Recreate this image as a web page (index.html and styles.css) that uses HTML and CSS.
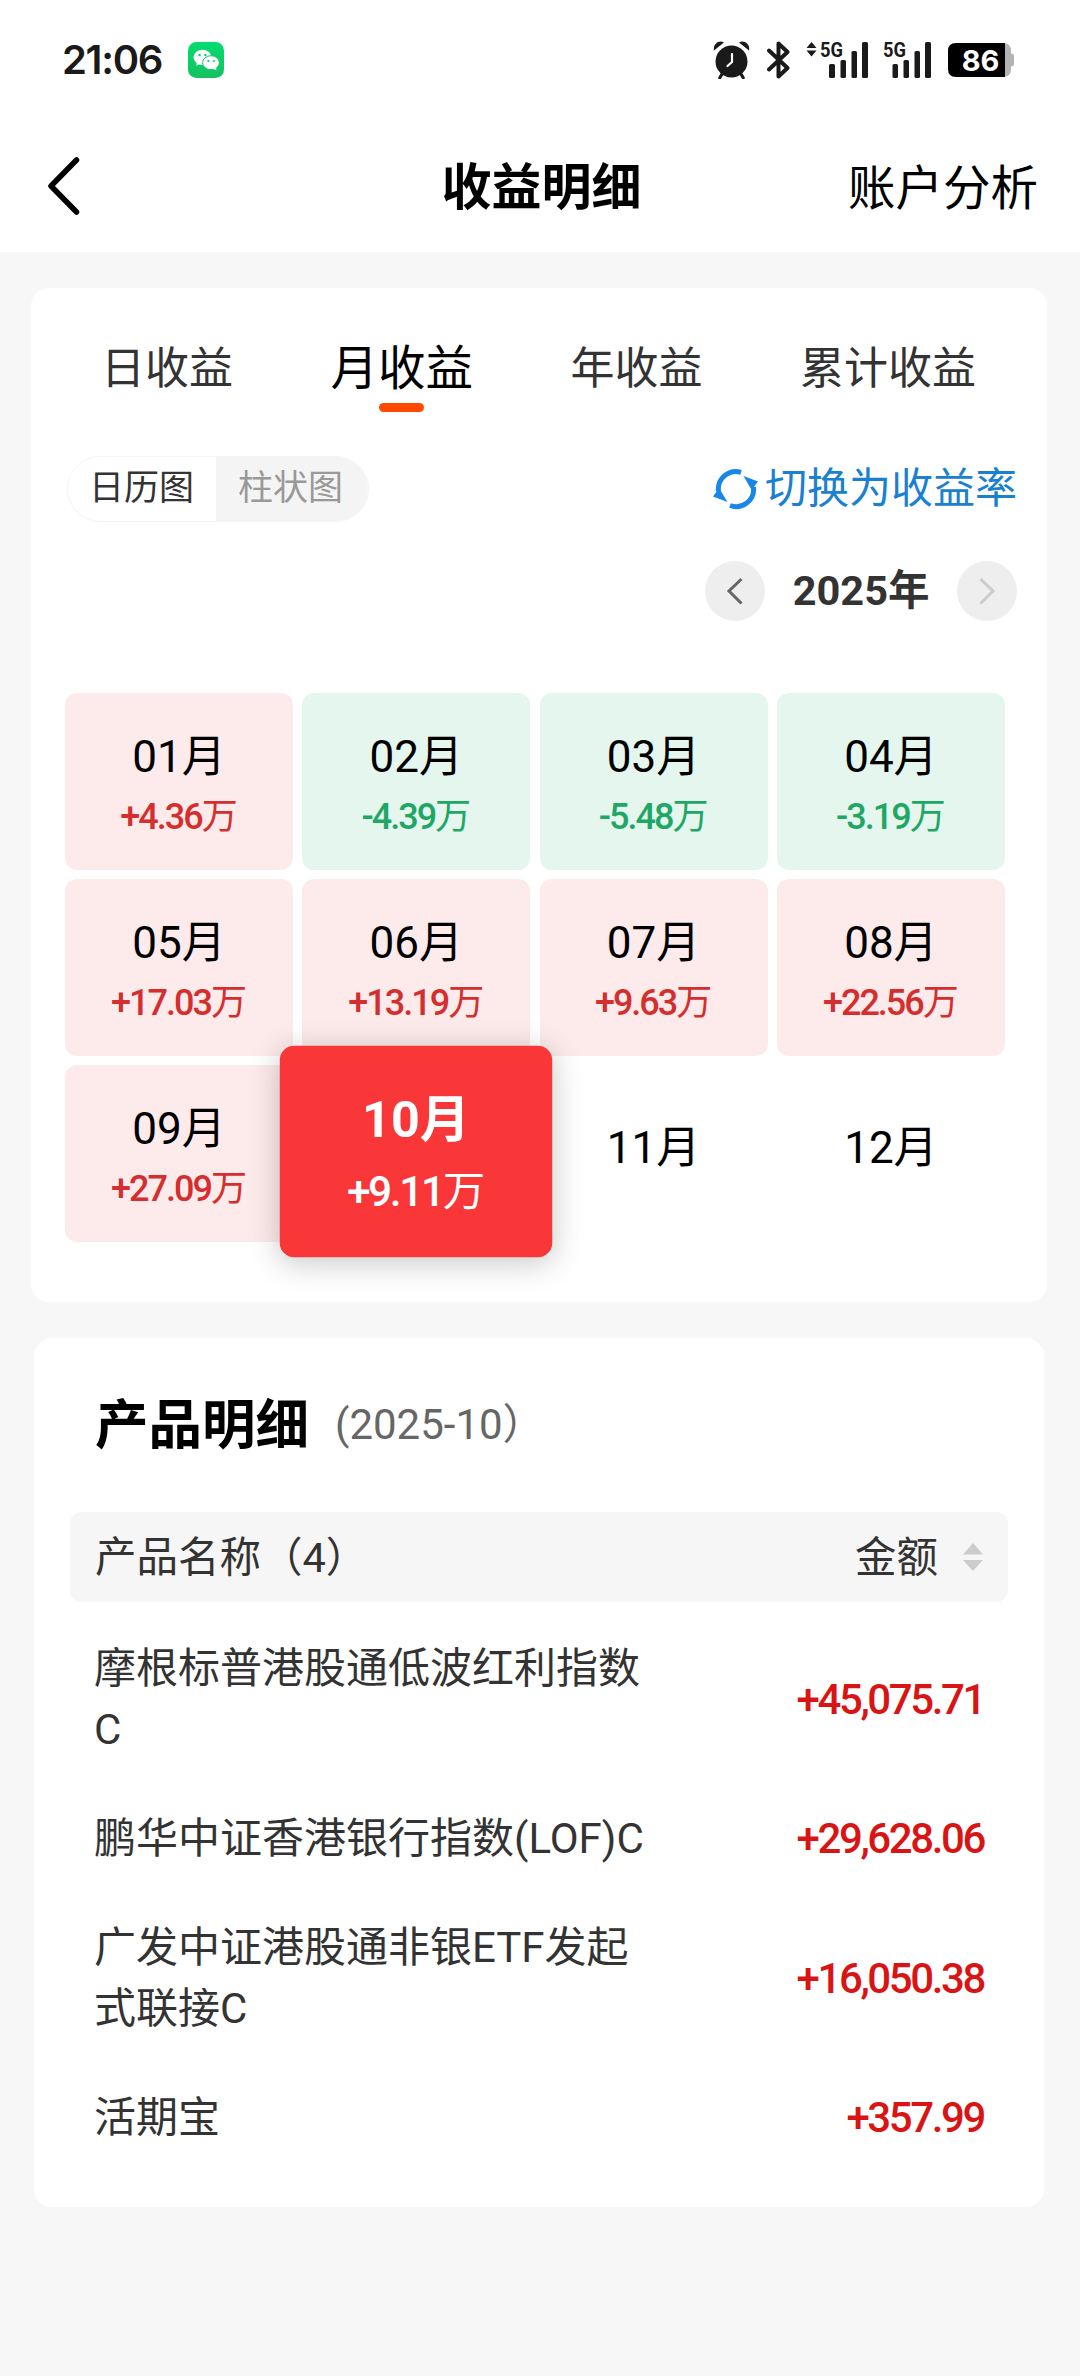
FILE: index.html
```
<!DOCTYPE html>
<html lang="zh-CN">
<head>
  <meta charset="UTF-8">
  <meta name="viewport" content="width=device-width, initial-scale=1.0">
  <title>收益明细</title>
  <link rel="stylesheet" href="styles.css">
</head>
<body>

  <!-- 状态栏 -->
  <div class="status-bar">
    <span class="time">21:06</span>
    <svg class="wechat" width="36" height="36" viewBox="0 0 36 36">
      <defs>
        <linearGradient id="wx" x1="0" y1="0" x2="0" y2="1">
          <stop offset="0" stop-color="#05dc70"/>
          <stop offset="1" stop-color="#14c160"/>
        </linearGradient>
      </defs>
      <rect width="36" height="36" rx="8.5" fill="url(#wx)"/>
      <ellipse cx="14.5" cy="15.3" rx="9" ry="7.6" fill="#fff"/>
      <path d="M9 20l-.8 3.8 4.3-2z" fill="#fff"/>
      <ellipse cx="23" cy="20.7" rx="8.4" ry="7" fill="#fff" stroke="#0dce68" stroke-width="1"/>
      <path d="M25 26.5l3.4 2-.4-4z" fill="#fff"/>
      <circle cx="11.6" cy="13" r="1.2" fill="#0dce68"/>
      <circle cx="17.4" cy="13" r="1.2" fill="#0dce68"/>
      <circle cx="20.4" cy="19" r="1.1" fill="#0dce68"/>
      <circle cx="25.8" cy="19" r="1.1" fill="#0dce68"/>
    </svg>

    <div class="status-icons">
      <svg class="alarm" width="37" height="38" viewBox="0 0 37 38">
        <circle cx="18.5" cy="20.5" r="16" fill="#1a1a1a"/>
        <path d="M1 9.5C-.5 4 5.5-2 11 1.5z" fill="#1a1a1a"/>
        <path d="M36 9.5C37.5 4 31.5-2 26 1.5z" fill="#1a1a1a"/>
        <path d="M9 33l-2.200 3.700M28 33l2.200 3.700" stroke="#1a1a1a" stroke-width="3.200" stroke-linecap="round"/>
        <path d="M19 13v8l-4.500 4" fill="none" stroke="#fff" stroke-width="2.200" stroke-linecap="round"/>
      </svg>
      <svg class="bluetooth" width="23" height="38" viewBox="0 0 23 38">
        <path d="M2 9.500l18.500 17.500-9 8.500v-33l9 8.500L2 28.500" fill="none" stroke="#1a1a1a" stroke-width="4" stroke-linejoin="round" stroke-linecap="round"/>
      </svg>
      <svg class="signal-main" width="62" height="46" viewBox="0 -4 62 46">
        <path d="M5.500 1l5 6h-10zM5.500 15.500l5-6h-10z" fill="#1a1a1a"/>
        <text x="14" y="15.500" class="net" textLength="23" lengthAdjust="spacingAndGlyphs">5G</text>
        <g fill="#1a1a1a">
          <rect x="23" y="23" width="6" height="14" rx="1.500"/>
          <rect x="34.500" y="19" width="5.500" height="18" rx="1.500"/>
          <rect x="45.500" y="10" width="5.500" height="27" rx="1.500"/>
          <rect x="56" y="1" width="6" height="36" rx="1.500"/>
        </g>
      </svg>
      <svg class="signal-sub" width="48" height="46" viewBox="0 -4 48 46">
        <text x="0" y="15.500" class="net" textLength="23" lengthAdjust="spacingAndGlyphs">5G</text>
        <g fill="#1a1a1a">
          <rect x="9.500" y="23" width="5.500" height="14" rx="1.500"/>
          <rect x="20.500" y="19" width="5.500" height="18" rx="1.500"/>
          <rect x="31.500" y="10" width="5.500" height="27" rx="1.500"/>
          <rect x="42" y="1" width="6" height="36" rx="1.500"/>
        </g>
      </svg>
      <svg class="battery" width="66" height="34" viewBox="0 0 66 34">
        <path d="M50 0h5q8 0 8 8v2.500q3 0 3 3v7q0 3-3 3v2.500q0 8-8 8h-5z" fill="#b3b3b3"/>
        <path d="M8 0h49v34H8q-8 0-8-8V8q0-8 8-8z" fill="#000"/>
        <text x="32.500" y="28" class="level" text-anchor="middle">86</text>
      </svg>
    </div>
  </div>

  <!-- 导航栏 -->
  <div class="nav">
    <div class="nav-side">
      <svg width="32" height="58" viewBox="0 0 32 58">
        <path d="M28.500 3L3 29l25.500 26" fill="none" stroke="#000" stroke-width="5.500" stroke-linecap="round" stroke-linejoin="round"/>
      </svg>
    </div>
    <h1>收益明细</h1>
    <div class="nav-side nav-right">账户分析</div>
  </div>

  <!-- 收益日历 -->
  <div class="card calendar">
    <div class="tabs">
      <span class="tab">日收益</span>
      <span class="tab active">月收益</span>
      <span class="tab">年收益</span>
      <span class="tab">累计收益</span>
    </div>

    <div class="tools">
      <div class="switch">
        <span class="on">日历图</span>
        <span class="off">柱状图</span>
      </div>
      <div class="toggle">
        <svg width="45" height="42" viewBox="0 0 45 42">
          <g fill="none" stroke="#1787ea" stroke-width="5">
            <path d="M5.500 23A17.500 17.500 0 0 1 28 4.300"/>
            <path d="M40.500 19A17.500 17.500 0 0 1 17 37.500"/>
          </g>
          <path d="M30.500 8L45 13.500 38.500 22z" fill="#1787ea"/>
          <path d="M0 28.500L6 20 14.500 34z" fill="#1787ea"/>
        </svg>
        <span>切换为收益率</span>
      </div>
    </div>

    <div class="year">
      <span class="arrow">
        <svg width="60" height="60" viewBox="0 0 60 60"><path d="M36.500 18L24 30l12.500 12.500" fill="none" stroke="#666" stroke-width="3"/></svg>
      </span>
      <strong>2025年</strong>
      <span class="arrow">
        <svg width="60" height="60" viewBox="0 0 60 60"><path d="M23.500 18L36 30 23.500 42.500" fill="none" stroke="#ccc" stroke-width="3"/></svg>
      </span>
    </div>

    <div class="months">
      <div class="month up"><b>01月</b><i>+4.36<em>万</em></i></div>
      <div class="month down"><b>02月</b><i>-4.39<em>万</em></i></div>
      <div class="month down"><b>03月</b><i>-5.48<em>万</em></i></div>
      <div class="month down"><b>04月</b><i>-3.19<em>万</em></i></div>
      <div class="month up"><b>05月</b><i>+17.03<em>万</em></i></div>
      <div class="month up"><b>06月</b><i>+13.19<em>万</em></i></div>
      <div class="month up"><b>07月</b><i>+9.63<em>万</em></i></div>
      <div class="month up"><b>08月</b><i>+22.56<em>万</em></i></div>
      <div class="month up"><b>09月</b><i>+27.09<em>万</em></i></div>
      <div class="month selected"><b>10月</b><i>+9.11<em>万</em></i></div>
      <div class="month empty"><b>11月</b></div>
      <div class="month empty"><b>12月</b></div>
    </div>
  </div>

  <!-- 产品明细 -->
  <div class="card products">
    <div class="title">
      <h2>产品明细</h2>
      <span>(2025-10）</span>
    </div>
    <div class="thead">
      <span>产品名称（4）</span>
      <div class="sort">
        <span>金额</span>
        <svg width="20" height="28" viewBox="0 0 20 28"><path d="M10 0l10 11.500H0zM10 28L0 17h20z" fill="#ccc"/></svg>
      </div>
    </div>
    <div class="rows">
      <div class="row"><span class="name">摩根标普港股通低波红利指数C</span><span class="money">+45,075.71</span></div>
      <div class="row"><span class="name">鹏华中证香港银行指数(LOF)C</span><span class="money">+29,628.06</span></div>
      <div class="row"><span class="name">广发中证港股通非银ETF发起式联接C</span><span class="money">+16,050.38</span></div>
      <div class="row"><span class="name">活期宝</span><span class="money">+357.99</span></div>
    </div>
  </div>

</body>
</html>
```
FILE: styles.css
```
* {
  box-sizing: border-box;
}

body {
  margin: 0;
  width: 1080px;
  min-height: 2376px;
  background-color: #f7f7f7;
  color: #333;
  font-family: Roboto, "Noto Sans CJK SC", sans-serif;
}

h1, h2 {
  margin: 0;
  color: #000;
}

svg {
  display: block;
}

/* 状态栏 */
.status-bar {
  display: flex;
  align-items: center;
  height: 120px;
  padding: 0 66px 0 62px;
  background-color: #fff;
}

.time {
  width: 126px;
  font-family: Inter, sans-serif;
  font-size: 40px;
  font-weight: 600;
  line-height: 48px;
  letter-spacing: -1.300px;
  color: #1a1a1a;
}

.status-icons {
  display: flex;
  align-items: center;
  margin-left: auto;
}

.bluetooth {
  margin-left: 17px;
}

.signal-main {
  margin-left: 16px;
}

.signal-sub {
  margin-left: 15px;
}

.battery {
  margin-left: 17px;
}

.net {
  font-family: Roboto, sans-serif;
  font-size: 21px;
  font-weight: 700;
  fill: #1a1a1a;
}

.level {
  font-family: Inter, sans-serif;
  font-size: 29px;
  font-weight: 700;
  fill: #fff;
}

/* 导航栏 */
.nav {
  display: flex;
  align-items: center;
  height: 132px;
  padding: 0 42px 0 48px;
  background-color: #fff;
}

.nav-side {
  flex: 1;
}

.nav h1 {
  padding: 0 3px 7px 0;
  font-size: 50px;
  font-weight: 700;
}

.nav-right {
  padding-bottom: 4px;
  font-size: 47.500px;
  color: #000;
  text-align: right;
}

.card {
  background-color: #fff;
  border-radius: 18px;
}

/* 收益日历 */
.calendar {
  height: 1014px;
  margin: 36px 33px 0 31px;
  padding: 0 30px 0 34px;
}

.tabs {
  display: flex;
  justify-content: space-between;
  height: 126px;
  padding: 0 41px 0 36px;
}

.tab {
  display: flex;
  flex-direction: column;
  align-items: center;
  padding-top: 48px;
  font-size: 44px;
  line-height: 66px;
}

.tab.active {
  font-size: 47.500px;
  color: #000;
}

.tab.active::after {
  content: "";
  width: 45px;
  height: 9px;
  margin-top: 1px;
  border-radius: 5px;
  background-color: #ff4800;
}

.tools {
  display: flex;
  justify-content: space-between;
  margin-top: 42px;
  padding-left: 2px;
}

.switch {
  display: flex;
  width: 302px;
  height: 66px;
  border: 1px solid #f4f4f4;
  border-radius: 33px;
  overflow: hidden;
  font-size: 35px;
  line-height: 64px;
}

.switch .on {
  width: 148px;
  padding-left: 21px;
}

.switch .off {
  flex: 1;
  padding-left: 22px;
  background-color: #f4f4f4;
  color: #999;
}

.toggle {
  display: flex;
  align-items: center;
  gap: 7px;
  font-size: 42px;
  line-height: 66px;
  color: #1a80d0;
}

.year {
  display: flex;
  justify-content: flex-end;
  align-items: center;
  gap: 27.500px;
  margin-top: 39px;
}

.year strong {
  font-size: 41.500px;
  line-height: 60px;
}

.arrow {
  border-radius: 50%;
  background-color: #eee;
}

.months {
  display: grid;
  grid-template-columns: repeat(4, 228px);
  grid-auto-rows: 177px;
  gap: 9px 9.300px;
  margin-top: 72px;
}

.month {
  display: flex;
  flex-direction: column;
  align-items: center;
  justify-content: center;
  padding-top: 4px;
  border-radius: 12px;
}

.month b {
  font-size: 44px;
  font-weight: 400;
  line-height: 66px;
  color: #000;
}

.month i {
  font-size: 36px;
  font-style: normal;
  font-weight: 500;
  line-height: 54px;
  letter-spacing: -2px;
}

.month em {
  font-style: normal;
  font-weight: 400;
  letter-spacing: 0;
}

.up {
  background-color: #fdebeb;
  color: #d52e2e;
}

.down {
  background-color: #e5f6ee;
  color: #1fa766;
}

.empty {
  padding: 0 0 12px;
}

.selected {
  position: relative;
  padding-top: 0;
  background-color: #f93739;
  color: #fff;
  transform: translateY(-2px) scale(1.195);
  box-shadow: 0 4px 26px rgba(0, 0, 0, 0.22);
}

.selected b {
  font-size: 42px;
  font-weight: 700;
  color: #fff;
}

.selected i {
  font-size: 35.500px;
}

/* 产品明细 */
.products {
  height: 869px;
  margin: 36px 36px 0 34px;
  padding: 0 36px;
}

.title {
  display: flex;
  align-items: center;
  gap: 26px;
  height: 174px;
  padding: 0 0 9px 25px;
}

.title h2 {
  font-size: 53.500px;
}

.title span {
  font-size: 42px;
  color: #666;
}

.thead {
  display: flex;
  justify-content: space-between;
  align-items: center;
  height: 90px;
  padding: 0 25px;
  border-radius: 12px;
  background-color: #f6f6f6;
  font-size: 41.500px;
}

.thead span {
  padding-bottom: 6px;
}

.sort {
  display: flex;
  align-items: center;
  gap: 25px;
}

.rows {
  display: flex;
  flex-direction: column;
  gap: 48px;
  padding: 36px 24px 0 24px;
}

.row {
  display: flex;
  justify-content: space-between;
  align-items: center;
}

.name {
  width: 560px;
  font-size: 42px;
  line-height: 61px;
}

.money {
  font-size: 42px;
  font-weight: 500;
  letter-spacing: -2.400px;
  color: #d91414;
}
```
